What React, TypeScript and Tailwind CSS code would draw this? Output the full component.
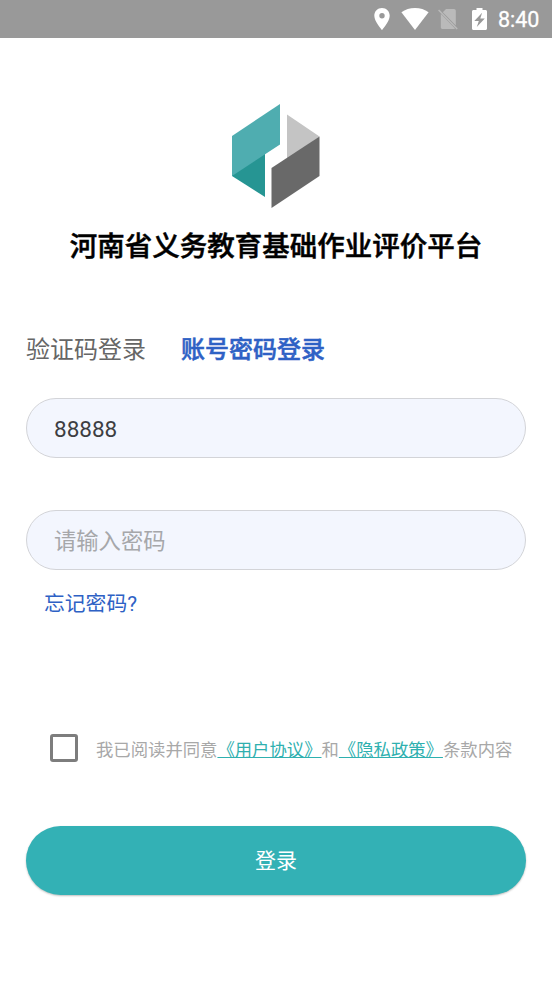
import React, { useState } from 'react';

type LoginMode = 'code' | 'password';

const StatusBar = () => (
    <header className="flex h-[38px] items-center justify-end bg-[#999999] pr-3 text-white">
        <svg width="16" height="22" viewBox="0 0 16 22" className="mr-[11px]">
            <path fill="currentColor" fillRule="evenodd" d="M8 0C3.6 0 .3 3.4.3 7.7.3 13.4 8 22 8 22s7.7-8.6 7.7-14.3C15.7 3.4 12.4 0 8 0Zm0 5a2.7 2.7 0 1 1 0 5.4A2.7 2.7 0 0 1 8 5Z" />
        </svg>
        <svg width="28" height="22" viewBox="0 0 28 22" className="mr-[9px]">
            <path fill="currentColor" d="M14 22 .4 4.3C4.2 1.5 8.9 0 14 0s9.800 1.500 13.600 4.300L14 22Z" />
        </svg>
        <svg width="20" height="22" viewBox="0 0 20 22" className="mr-[14px]">
            <path fill="#bababa" d="M8 1h8c1 0 1.8.8 1.8 1.800V17.500L4.800 4.200 8 1ZM2.800 5.800 17 20.500c-.3.300-.6.500-1 .5H4.600c-1 0-1.800-.8-1.800-1.800V5.800Z" />
            <path stroke="#bababa" strokeWidth="1.500" d="m.6 2 18.600 19" />
        </svg>
        <svg width="15" height="22" viewBox="0 0 15 22" className="mr-[11px]">
            <path fill="currentColor" fillRule="evenodd" d="M4.500 0h6v2H13.500c.8 0 1.500.7 1.500 1.500v17c0 .8-.7 1.500-1.500 1.500h-12C.7 22 0 21.300 0 20.500v-17C0 2.700.7 2 1.500 2h3V0Zm5.600 4.800L2.300 12.900h4.500L4.800 19l8-8.400H8.300l1.800-5.800Z" />
        </svg>
        <span className="w-[42px] pt-px font-['Roboto'] text-[21.5px] leading-[38px] font-normal [-webkit-text-stroke:0.3px]">8:40</span>
    </header>
);

const Logo = () => (
    <svg width="88" height="104" viewBox="0 0 88 104">
        <path fill="#269593" d="M0 48.500 33 31v62L0 72Z" />
        <path fill="#4fadb0" d="M0 32 48 0v40.500L0 72Z" />
        <path fill="#c4c4c4" d="M55 10.500 87.500 32.500 55 56Z" />
        <path fill="#696969" d="M39.500 64 87.500 32.500V72l-48 32Z" />
    </svg>
);

const App: React.FC = () => {
    const [mode, setMode] = useState<LoginMode>('password');
    const [account, setAccount] = useState('88888');
    const [password, setPassword] = useState('');
    const [agreed, setAgreed] = useState(false);

    const tabClass = (value: LoginMode) =>
        mode === value
            ? 'font-medium text-[#2e61c5] [-webkit-text-stroke:0.5px]'
            : 'font-normal text-[#666666]';

    const inputClass =
        'block h-[60px] w-full rounded-full border border-[#d3d4d8] bg-[#f3f6fe] px-[27px] pt-0.5 outline-none placeholder:text-[#a6a7aa]';

    return (
        <div className="flex h-[981px] w-[552px] flex-col overflow-hidden bg-white font-['Roboto','Noto_Sans_CJK_SC',sans-serif]">
            <StatusBar />
            <main className="flex flex-col px-[26px]">
                <div className="flex flex-col items-center pt-[66px]">
                    <Logo />
                    <h1 className="mt-[19px] h-10 text-[27.5px] leading-10 font-medium whitespace-nowrap text-black [-webkit-text-stroke:0.5px]">
                        河南省义务教育基础作业评价平台
                    </h1>
                </div>

                <div className="mt-[63px] flex h-10 gap-[35px] text-[24px] leading-10">
                    <button className={tabClass('code')} onClick={() => setMode('code')}>验证码登录</button>
                    <button className={tabClass('password')} onClick={() => setMode('password')}>账号密码登录</button>
                </div>

                <input
                    className={`${inputClass} mt-[28px] text-[22.5px] text-[#3d3e42]`}
                    value={account}
                    onChange={(e) => setAccount(e.target.value)}
                />
                <input
                    type="password"
                    className={`${inputClass} mt-[52px] text-[22.3px]`}
                    placeholder="请输入密码"
                    value={password}
                    onChange={(e) => setPassword(e.target.value)}
                />
                <button className="mt-[18px] ml-[18px] h-8 self-start text-[20.8px] leading-8 text-[#2e61c5]">忘记密码?</button>

                <div className="mt-[114px] ml-6 flex h-7 items-center">
                    <button
                        role="checkbox"
                        aria-checked={agreed}
                        onClick={() => setAgreed(!agreed)}
                        className={`size-7 shrink-0 rounded-[3px] border-3 border-[#7d7d7d] ${agreed ? 'bg-[#33b1b5]' : 'bg-white'}`}
                    />
                    <p className="mt-1 ml-[18px] text-[17.35px] leading-7 whitespace-nowrap text-[#a8a8a8]">
                        我已阅读并同意
                        <a className="text-[#2fb0af] underline decoration-1 underline-offset-1 [text-decoration-skip-ink:none]">《用户协议》</a>
                        和
                        <a className="text-[#2fb0af] underline decoration-1 underline-offset-1 [text-decoration-skip-ink:none]">《隐私政策》</a>
                        条款内容
                    </p>
                </div>

                <button className="mt-16 h-[69px] rounded-full bg-[#33b1b5] pt-[3px] text-[21px] text-white shadow-[0_1px_2px_rgba(0,0,0,0.25)]">
                    登录
                </button>
            </main>
        </div>
    );
};

export default App;
